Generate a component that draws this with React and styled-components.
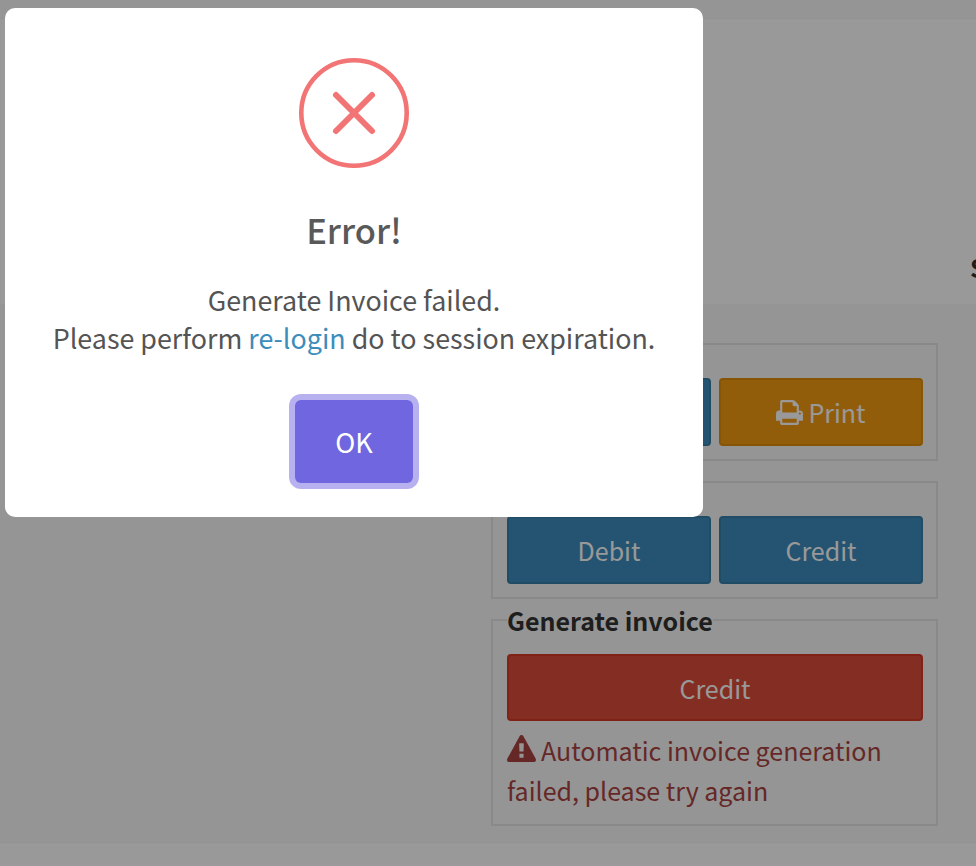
import styled, { createGlobalStyle } from 'styled-components'

const GlobalStyle = createGlobalStyle`
  html, body {
    margin: 0;
    height: 100%;
    overflow: hidden;
    background: #fff;
    font-family: "Noto Sans CJK SC", "Noto Sans", sans-serif;
    font-size: 25px;
    color: #333;
  }
  * {
    box-sizing: border-box;
  }
`
const Page = styled.div`
  display: flex;
  flex-direction: column;
  height: 866px;
  overflow: hidden;
`
const TopBar = styled.div`
  height: 19px;
  background-color: #f8f8f8;
  border-bottom: 1px solid #f4f4f4;
`
const Header = styled.div`
  height: 285px;
  display: flex;
  align-items: flex-end;
  padding: 0 0 20px 970px;
  font-weight: 700;
  line-height: 34px;
  white-space: nowrap;
  background-color: #fff;
`
const Main = styled.div`
  height: 538px;
  display: flex;
  flex-direction: column;
  gap: 20px;
  padding: 39px 38px 0 491px;
  background-color: #f8f8f8;
`
const Footer = styled.div`
  flex-grow: 1;
  background-color: #fff;
  border-top: 1px solid #f4f4f4;
`
const Group = styled.fieldset`
  margin: ${(props) => (props.$legend ? '-16px 0 0' : '0')};
  min-width: 0;
  height: ${(props) => (props.$legend ? 'auto' : '118px')};
  padding: ${(props) => (props.$legend ? '0 13px 14px 14px' : '33px 13px 13px 14px')};
  border: 2px solid #e4e4e4;
`
const GroupTitle = styled.legend`
  padding: 0;
  margin-bottom: 17px;
  font-weight: 700;
  line-height: 34px;
  color: #333;
`
const ButtonRow = styled.div`
  display: flex;
  gap: 8px;
`
const Btn = styled.button`
  flex: 1;
  height: ${(props) => props.$height || '68px'};
  display: flex;
  align-items: center;
  justify-content: center;
  gap: 5px;
  padding: 0;
  border-radius: 4px;
  border: 2px solid ${(props) => props.$border};
  background-color: ${(props) => props.$bg};
  color: #fff;
  font-family: inherit;
  font-size: 25px;
`
const ErrorText = styled.p`
  margin: 9px 0 0;
  line-height: 40px;
  color: #a94442;
`
const WarnIcon = styled.svg`
  width: 29px;
  height: 29px;
  margin-right: 5px;
  vertical-align: -3px;
  fill: currentColor;
`
const PrintIcon = styled.svg`
  width: 27px;
  height: 29px;
  fill: currentColor;
`
const Overlay = styled.div`
  position: fixed;
  inset: 0;
  background-color: rgba(0, 0, 0, 0.4);
`
const Modal = styled.div`
  position: absolute;
  left: 5px;
  top: 8px;
  width: 698px;
  height: 509px;
  display: flex;
  flex-direction: column;
  align-items: center;
  padding-top: 50px;
  border-radius: 10px;
  background-color: #fff;
`
const ErrorIcon = styled.svg`
  width: 110px;
  height: 110px;
  display: block;
`
const ModalTitle = styled.h2`
  margin: 39px 0 0;
  font-size: 34.5px;
  line-height: 44px;
  font-weight: 500;
  color: #595959;
`
const ModalText = styled.div`
  margin-top: 30px;
  text-align: center;
  font-size: 26.85px;
  line-height: 38px;
  color: #545454;
  a {
    color: #3c8dbc;
    text-decoration: none;
  }
`
const OkButton = styled.button`
  margin-top: 43px;
  width: 118px;
  height: 83px;
  border: 0;
  border-radius: 6px;
  background-color: #7066e0;
  box-shadow: 0 0 0 6px rgba(112, 102, 224, 0.5);
  color: #fff;
  font-family: inherit;
  font-size: 27px;
`

function App() {
  return (
    <>
      <GlobalStyle />
      <Page>
        <TopBar />
        <Header>S</Header>
        <Main>
          <Group>
            <ButtonRow>
              <Btn $bg="#3c8dbc" $border="#367fa9" />
              <Btn $bg="#f39c12" $border="#e08e0b">
                <PrintIcon viewBox="64 0 1664 1792">
                  <path d="M448 1536h896v-256h-896v256zm0-640h896v-384h-160q-40 0-68-28t-28-68v-160h-640v640zm1152 64q0-26-19-45t-45-19-45 19-19 45 19 45 45 19 45-19 19-45zm128 0v416q0 13-9.5 22.5t-22.5 9.5h-224v160q0 40-28 68t-68 28h-960q-40 0-68-28t-28-68v-160h-224q-13 0-22.5-9.5t-9.5-22.5v-416q0-79 56.5-135.5t135.5-56.5h64v-544q0-40 28-68t68-28h672q40 0 88 20t76 48l152 152q28 28 48 76t20 88v256h64q79 0 135.5 56.5t56.5 135.5z" />
                </PrintIcon>
                Print
              </Btn>
            </ButtonRow>
          </Group>
          <Group>
            <ButtonRow>
              <Btn $bg="#3c8dbc" $border="#367fa9">Debit</Btn>
              <Btn $bg="#3c8dbc" $border="#367fa9">Credit</Btn>
            </ButtonRow>
          </Group>
          <Group $legend>
            <GroupTitle>Generate invoice</GroupTitle>
            <ButtonRow>
              <Btn $bg="#dd4b39" $border="#d73925" $height="67px">Credit</Btn>
            </ButtonRow>
            <ErrorText>
              <WarnIcon viewBox="0 0 1792 1792">
                <path d="M1024 1375v-190q0-14-9.5-23.5t-22.5-9.5h-192q-13 0-22.5 9.5t-9.5 23.5v190q0 14 9.5 23.5t22.5 9.5h192q13 0 22.5-9.5t9.5-23.5zm-2-374l18-459q0-12-10-19-13-11-24-11h-220q-11 0-24 11-10 7-10 21l17 457q0 10 10 16.5t24 6.5h185q14 0 23.5-6.5t10.5-16.5zm-14-934l768 1408q35 63-2 126-17 29-46.5 46t-63.5 17h-1536q-34 0-63.5-17t-46.5-46q-37-63-2-126l768-1408q17-31 47-49t65-18 65 18 47 49z" />
              </WarnIcon>
              Automatic invoice generation failed, please try again
            </ErrorText>
          </Group>
        </Main>
        <Footer />
      </Page>
      <Overlay>
        <Modal>
          <ErrorIcon viewBox="0 0 110 110">
            <circle cx="55" cy="55" r="52.7" fill="none" stroke="#f27474" strokeWidth="4.6" />
            <path
              d="M37 37 L73 73 M73 37 L37 73"
              fill="none"
              stroke="#f27474"
              strokeWidth="6"
              strokeLinecap="round"
            />
          </ErrorIcon>
          <ModalTitle>Error!</ModalTitle>
          <ModalText>
            Generate Invoice failed.
            <br />
            Please perform <a href="#login">re-login</a> do to session expiration.
          </ModalText>
          <OkButton>OK</OkButton>
        </Modal>
      </Overlay>
    </>
  )
}
export default App
